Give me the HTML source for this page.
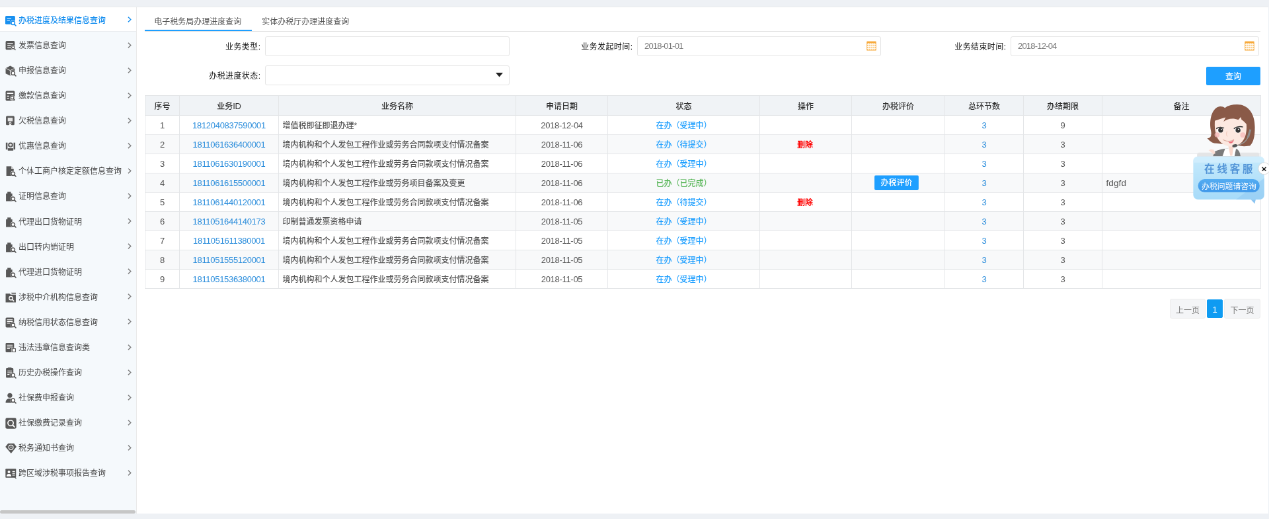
<!DOCTYPE html>
<html lang="zh-CN">
<head>
<meta charset="utf-8">
<title>办税进度及结果信息查询</title>
<style>
*{box-sizing:border-box;margin:0;padding:0}
html,body{width:1269px;height:519px;overflow:hidden;background:#eef1f5}
body{font-family:"Liberation Sans","Noto Sans CJK SC",sans-serif;font-size:12px;color:#444;font-weight:500}
#stage{position:absolute;left:0;top:0;width:1920px;height:786px;transform:scale(0.6609375);transform-origin:0 0;background:#eef1f5;overflow:hidden;will-change:transform}
.abs{position:absolute}
#side{position:absolute;left:0;top:10px;width:207px;height:767px;background:#f5f9fc;border-right:1px solid #e9e9e9}
.sitem{position:absolute;left:0;width:206px;height:38px;line-height:38px;color:#484848;font-size:12px;font-weight:400;white-space:nowrap}
.sitem.act{background:#fff;color:#1890f0;border-bottom:1px solid #e9ecef;font-weight:500}
.sitem .ic{position:absolute;left:8px;top:12.5px}
.sitem .st{position:absolute;left:28px;top:1.5px}
.sitem .chev{position:absolute;left:192.5px;top:15.3px}
#sbar{position:absolute;left:0;top:772px;width:205px;height:5px;border-radius:3px;background:#c6c6c6}
#main{position:absolute;left:207px;top:10px;width:1712px;height:767px;background:#fff}
#tabs{position:absolute;left:219.3px;top:16px;width:1687.7px;height:32px;border-bottom:1px solid #e2e2e2}
.tab{position:absolute;top:0;height:31px;line-height:35px;padding:0 15px;font-size:12px;color:#555;font-weight:400;white-space:nowrap}
.tab.on{border-bottom:2px solid #1e9fff}
.lab{position:absolute;height:30px;line-height:30px;font-size:12px;color:#111;font-weight:400;text-align:right;white-space:nowrap;padding-top:1px;letter-spacing:0.4px;margin-left:0.4px}
.inp{position:absolute;height:30px;border:1px solid #e4e4e4;border-radius:3px;background:#fff;line-height:28px;font-size:13px;letter-spacing:-0.8px;color:#777;padding-left:10px}
.btn{position:absolute;background:#1e9fff;color:#fff;text-align:center;border-radius:2px;font-size:12px;white-space:nowrap}
.tb{position:absolute;left:219px;top:144px;width:1688px;transform:scaleY(1.0034);transform-origin:0 0;border-collapse:collapse;table-layout:fixed;font-size:12px;color:#555}
.tb th,.tb td{border:1px solid #e4e6e8;text-align:center;padding:0;white-space:nowrap;overflow:hidden}
.tb th{height:30px;background:#f0f3f6;font-weight:500;color:#333}
.tb td{height:29px;line-height:26px;padding-top:2px}
.tb tr.ev td{background:#f8f9fa}
.tb td.l{text-align:left;padding-left:5.5px}
.lk{color:#2a8ddc}
.num{font-size:13px;letter-spacing:-0.3px}
.rm{font-size:13.5px;letter-spacing:0.1px;color:#555}
.doing{color:#1e9fff}
.done{color:#5cb85c}
.del{color:#f00;font-weight:700;margin-right:2px}
.pj{display:inline-block;position:relative;top:-2px;margin-right:5px;width:67px;height:22px;line-height:22px;background:#1e9fff;color:#fff;border-radius:2px;vertical-align:middle;font-size:12px}
.pg{position:absolute;height:30px;line-height:28px;padding-top:2.5px;border:1px solid #ececec;background:#f4f5f7;border-radius:3px;color:#777;font-weight:400;font-size:12px;text-align:center;white-space:nowrap}
.pg.cur{background:#0e9bf2;border-color:#0e9bf2;color:#fff;height:28px;line-height:26px;padding-top:1.5px;border-radius:2px;font-weight:400;font-size:13px}
</style>
</head>
<body>
<div id="stage">
<div id="side">
<div class="sitem act" style="top:0.0px"><svg class="ic" viewBox="0 0 16 16" width="17" height="17"><rect x="0" y="1" width="14" height="12" rx="1.5" fill="#1890f0"/><path d="M2.5 4.5h6M2.5 7h4" stroke="#fff" stroke-width="1"/><circle cx="11" cy="11" r="3.6" fill="#fff"/><circle cx="11" cy="11" r="2.6" fill="none" stroke="#1890f0" stroke-width="1.4"/><path d="M13 13l2 2" stroke="#1890f0" stroke-width="1.5" stroke-linecap="round"/></svg><span class="st">办税进度及结果信息查询</span><svg class="chev" viewBox="0 0 6 9" width="6" height="9"><path d="M1 0.7L4.8 4.5 1 8.3" fill="none" stroke="#1890f0" stroke-width="1.45"/></svg></div>
<div class="sitem" style="top:38.65px"><svg class="ic" viewBox="0 0 16 16" width="17" height="17"><rect x="0.5" y="1" width="13" height="12.5" rx="1.5" fill="#585858"/><path d="M3 4.5h8M3 7.5h5M3 10.5h5" stroke="#fff" stroke-width="1.2"/><circle cx="11.3" cy="10.3" r="3.2" fill="#fff"/><circle cx="11" cy="10" r="2" fill="none" stroke="#585858" stroke-width="1.2"/><path d="M12.6 11.8l2 2" stroke="#585858" stroke-width="1.4"/></svg><span class="st">发票信息查询</span><svg class="chev" viewBox="0 0 6 9" width="6" height="9"><path d="M1 0.7L4.8 4.5 1 8.3" fill="none" stroke="#7d7d7d" stroke-width="1.45"/></svg></div>
<div class="sitem" style="top:76.7px"><svg class="ic" viewBox="0 0 16 16" width="17" height="17"><path d="M7 0.5L13.5 4v7.5L7 14.5 0.5 11.5V4z" fill="#585858"/><path d="M0.5 4L7 7.2 13.5 4M7 7.2v7" stroke="#fff" stroke-width="0.8" fill="none"/><circle cx="11" cy="11" r="3.6" fill="#fff"/><circle cx="11" cy="11" r="2.6" fill="none" stroke="#585858" stroke-width="1.4"/><path d="M13 13l2 2" stroke="#585858" stroke-width="1.5" stroke-linecap="round"/></svg><span class="st">申报信息查询</span><svg class="chev" viewBox="0 0 6 9" width="6" height="9"><path d="M1 0.7L4.8 4.5 1 8.3" fill="none" stroke="#7d7d7d" stroke-width="1.45"/></svg></div>
<div class="sitem" style="top:114.75px"><svg class="ic" viewBox="0 0 16 16" width="17" height="17"><rect x="0.5" y="0.5" width="13" height="14" rx="1.5" fill="#585858"/><path d="M2.5 4h9" stroke="#fff" stroke-width="1.6"/><path d="M2.5 8h3M2.5 11h3" stroke="#fff" stroke-width="1.2"/><circle cx="10.2" cy="10.4" r="3.4" fill="#fff"/><circle cx="10" cy="10" r="2.1" fill="none" stroke="#585858" stroke-width="1.2"/><path d="M11.6 11.8l2 2" stroke="#585858" stroke-width="1.4"/></svg><span class="st">缴款信息查询</span><svg class="chev" viewBox="0 0 6 9" width="6" height="9"><path d="M1 0.7L4.8 4.5 1 8.3" fill="none" stroke="#7d7d7d" stroke-width="1.45"/></svg></div>
<div class="sitem" style="top:152.8px"><svg class="ic" viewBox="0 0 16 16" width="17" height="17"><rect x="1" y="0.5" width="12" height="13" rx="1.5" fill="#585858"/><rect x="3.5" y="3" width="7" height="5" fill="#fff" opacity=".85"/><path d="M5 13.5l2-2 2 2v1.5l-2-1.2-2 1.2z" fill="#fff"/><circle cx="7" cy="10.8" r="1.8" fill="#fff"/><circle cx="7" cy="10.8" r="1" fill="#585858"/></svg><span class="st">欠税信息查询</span><svg class="chev" viewBox="0 0 6 9" width="6" height="9"><path d="M1 0.7L4.8 4.5 1 8.3" fill="none" stroke="#7d7d7d" stroke-width="1.45"/></svg></div>
<div class="sitem" style="top:190.85px"><svg class="ic" viewBox="0 0 16 16" width="17" height="17"><path d="M0.8 2.5h2.4v10H0.8zM11.8 2.5h2.4v10h-2.4z" fill="#585858"/><circle cx="7.5" cy="6" r="3.6" fill="#585858"/><path d="M7.5 4v4M5.8 5.2h3.4M5.8 6.8h3.4" stroke="#fff" stroke-width="0.8"/><path d="M3.6 10.5h7.8v3.5H3.6z" fill="#585858"/></svg><span class="st">优惠信息查询</span><svg class="chev" viewBox="0 0 6 9" width="6" height="9"><path d="M1 0.7L4.8 4.5 1 8.3" fill="none" stroke="#7d7d7d" stroke-width="1.45"/></svg></div>
<div class="sitem" style="top:228.9px"><svg class="ic" viewBox="0 0 16 16" width="17" height="17"><path d="M1.5 0.5h7l3.5 3.5v10h-10.5z" fill="#585858"/><path d="M8.5 0.5v3.5H12" fill="#fff" opacity=".7"/><circle cx="11" cy="11" r="3.6" fill="#fff"/><circle cx="11" cy="11" r="2.6" fill="none" stroke="#585858" stroke-width="1.4"/><path d="M13 13l2 2" stroke="#585858" stroke-width="1.5" stroke-linecap="round"/></svg><span class="st">个体工商户核定定额信息查询</span><svg class="chev" viewBox="0 0 6 9" width="6" height="9"><path d="M1 0.7L4.8 4.5 1 8.3" fill="none" stroke="#7d7d7d" stroke-width="1.45"/></svg></div>
<div class="sitem" style="top:266.95px"><svg class="ic" viewBox="0 0 16 16" width="17" height="17"><path d="M1 3.5h9v11H1z" fill="#585858"/><path d="M3 1h5v3H3z" fill="#585858"/><circle cx="11" cy="11" r="3.6" fill="#fff"/><circle cx="11" cy="11" r="2.6" fill="none" stroke="#585858" stroke-width="1.4"/><path d="M13 13l2 2" stroke="#585858" stroke-width="1.5" stroke-linecap="round"/></svg><span class="st">证明信息查询</span><svg class="chev" viewBox="0 0 6 9" width="6" height="9"><path d="M1 0.7L4.8 4.5 1 8.3" fill="none" stroke="#7d7d7d" stroke-width="1.45"/></svg></div>
<div class="sitem" style="top:305.0px"><svg class="ic" viewBox="0 0 16 16" width="17" height="17"><path d="M1 3.5h9v11H1z" fill="#585858"/><path d="M3 1h5v3H3z" fill="#585858"/><circle cx="11" cy="11" r="3.6" fill="#fff"/><circle cx="11" cy="11" r="2.6" fill="none" stroke="#585858" stroke-width="1.4"/><path d="M13 13l2 2" stroke="#585858" stroke-width="1.5" stroke-linecap="round"/></svg><span class="st">代理出口货物证明</span><svg class="chev" viewBox="0 0 6 9" width="6" height="9"><path d="M1 0.7L4.8 4.5 1 8.3" fill="none" stroke="#7d7d7d" stroke-width="1.45"/></svg></div>
<div class="sitem" style="top:343.05px"><svg class="ic" viewBox="0 0 16 16" width="17" height="17"><path d="M1 3.5h9v11H1z" fill="#585858"/><path d="M3 1h5v3H3z" fill="#585858"/><circle cx="11" cy="11" r="3.6" fill="#fff"/><circle cx="11" cy="11" r="2.6" fill="none" stroke="#585858" stroke-width="1.4"/><path d="M13 13l2 2" stroke="#585858" stroke-width="1.5" stroke-linecap="round"/></svg><span class="st">出口转内销证明</span><svg class="chev" viewBox="0 0 6 9" width="6" height="9"><path d="M1 0.7L4.8 4.5 1 8.3" fill="none" stroke="#7d7d7d" stroke-width="1.45"/></svg></div>
<div class="sitem" style="top:381.1px"><svg class="ic" viewBox="0 0 16 16" width="17" height="17"><path d="M1 3.5h9v11H1z" fill="#585858"/><path d="M3 1h5v3H3z" fill="#585858"/><circle cx="11" cy="11" r="3.6" fill="#fff"/><circle cx="11" cy="11" r="2.6" fill="none" stroke="#585858" stroke-width="1.4"/><path d="M13 13l2 2" stroke="#585858" stroke-width="1.5" stroke-linecap="round"/></svg><span class="st">代理进口货物证明</span><svg class="chev" viewBox="0 0 6 9" width="6" height="9"><path d="M1 0.7L4.8 4.5 1 8.3" fill="none" stroke="#7d7d7d" stroke-width="1.45"/></svg></div>
<div class="sitem" style="top:419.15px"><svg class="ic" viewBox="0 0 16 16" width="17" height="17"><path d="M0.5 2h6l1.2 1.6h7.3V14.5H0.5z" fill="#585858"/><path d="M8.2 0.8h6.8v2H9.4z" fill="#585858" opacity=".75"/><circle cx="8" cy="8.6" r="2.5" fill="none" stroke="#fff" stroke-width="1.3"/><path d="M9.9 10.5l2.1 2.1" stroke="#fff" stroke-width="1.4" stroke-linecap="round"/></svg><span class="st">涉税中介机构信息查询</span><svg class="chev" viewBox="0 0 6 9" width="6" height="9"><path d="M1 0.7L4.8 4.5 1 8.3" fill="none" stroke="#7d7d7d" stroke-width="1.45"/></svg></div>
<div class="sitem" style="top:457.2px"><svg class="ic" viewBox="0 0 16 16" width="17" height="17"><rect x="0.5" y="0.5" width="12" height="14" rx="1.5" fill="#585858"/><path d="M2.5 3.5h8M2.5 6h8M2.5 8.5h4" stroke="#fff" stroke-width="1"/><circle cx="11" cy="11" r="3.6" fill="#fff"/><circle cx="11" cy="11" r="2.6" fill="none" stroke="#585858" stroke-width="1.4"/><path d="M13 13l2 2" stroke="#585858" stroke-width="1.5" stroke-linecap="round"/></svg><span class="st">纳税信用状态信息查询</span><svg class="chev" viewBox="0 0 6 9" width="6" height="9"><path d="M1 0.7L4.8 4.5 1 8.3" fill="none" stroke="#7d7d7d" stroke-width="1.45"/></svg></div>
<div class="sitem" style="top:495.25px"><svg class="ic" viewBox="0 0 16 16" width="17" height="17"><rect x="0.5" y="1" width="12" height="13" rx="1.2" fill="#585858"/><path d="M2.5 4h8M2.5 6.5h8M2.5 9h4" stroke="#fff" stroke-width="1"/><rect x="9" y="8" width="6" height="6" fill="#fff"/><rect x="10" y="9" width="4.5" height="4.5" fill="none" stroke="#585858" stroke-width="1"/></svg><span class="st">违法违章信息查询类</span><svg class="chev" viewBox="0 0 6 9" width="6" height="9"><path d="M1 0.7L4.8 4.5 1 8.3" fill="none" stroke="#7d7d7d" stroke-width="1.45"/></svg></div>
<div class="sitem" style="top:533.3px"><svg class="ic" viewBox="0 0 16 16" width="17" height="17"><rect x="1" y="1" width="10.5" height="13.5" rx="1.2" fill="#585858"/><rect x="3.5" y="0" width="5.5" height="2.6" rx="0.8" fill="#585858"/><path d="M3 5h6.5M3 7.5h6.5M3 10h3" stroke="#fff" stroke-width="1"/><circle cx="11" cy="11" r="3.6" fill="#fff"/><circle cx="11" cy="11" r="2.6" fill="none" stroke="#585858" stroke-width="1.4"/><path d="M13 13l2 2" stroke="#585858" stroke-width="1.5" stroke-linecap="round"/></svg><span class="st">历史办税操作查询</span><svg class="chev" viewBox="0 0 6 9" width="6" height="9"><path d="M1 0.7L4.8 4.5 1 8.3" fill="none" stroke="#7d7d7d" stroke-width="1.45"/></svg></div>
<div class="sitem" style="top:571.35px"><svg class="ic" viewBox="0 0 16 16" width="17" height="17"><circle cx="6.5" cy="4" r="3.4" fill="#585858"/><path d="M0.5 14.5c0-4.5 2.6-6 6-6s6 1.5 6 6z" fill="#585858"/><circle cx="11" cy="11" r="3.6" fill="#fff"/><circle cx="11" cy="11" r="2.6" fill="none" stroke="#585858" stroke-width="1.4"/><path d="M13 13l2 2" stroke="#585858" stroke-width="1.5" stroke-linecap="round"/></svg><span class="st">社保费申报查询</span><svg class="chev" viewBox="0 0 6 9" width="6" height="9"><path d="M1 0.7L4.8 4.5 1 8.3" fill="none" stroke="#7d7d7d" stroke-width="1.45"/></svg></div>
<div class="sitem" style="top:609.4px"><svg class="ic" viewBox="0 0 16 16" width="17" height="17"><rect x="0.3" y="0.3" width="15.4" height="15.4" rx="2.2" fill="#585858"/><circle cx="7.6" cy="7.6" r="3.9" fill="none" stroke="#fff" stroke-width="1.5"/><path d="M10.6 10.6l2.4 2.4" stroke="#fff" stroke-width="1.7" stroke-linecap="round"/></svg><span class="st">社保缴费记录查询</span><svg class="chev" viewBox="0 0 6 9" width="6" height="9"><path d="M1 0.7L4.8 4.5 1 8.3" fill="none" stroke="#7d7d7d" stroke-width="1.45"/></svg></div>
<div class="sitem" style="top:647.45px"><svg class="ic" viewBox="0 0 16 16" width="17" height="17"><path d="M4 1h8.5L16 5.6 8.2 15 0.2 5.6z" fill="#585858"/><circle cx="8.1" cy="6.4" r="3.7" fill="#fff"/><circle cx="8.1" cy="6.4" r="2.6" fill="#585858"/><circle cx="8.1" cy="6.4" r="1.2" fill="#fff" opacity=".55"/></svg><span class="st">税务通知书查询</span><svg class="chev" viewBox="0 0 6 9" width="6" height="9"><path d="M1 0.7L4.8 4.5 1 8.3" fill="none" stroke="#7d7d7d" stroke-width="1.45"/></svg></div>
<div class="sitem" style="top:685.5px"><svg class="ic" viewBox="0 0 16 16" width="17" height="17"><rect x="0.3" y="1.2" width="15" height="12.6" rx="0.8" fill="#585858"/><circle cx="5.2" cy="5.6" r="1.9" fill="#fff"/><path d="M1.8 12c0-2.8 1.4-3.6 3.4-3.6s3.4.8 3.4 3.6z" fill="#fff"/><path d="M10 5h3.8M10 7.6h3.8M10 10.2h3.8" stroke="#fff" stroke-width="1.1"/><path d="M13.6 13.4l2 2" stroke="#585858" stroke-width="1"/></svg><span class="st">跨区域涉税事项报告查询</span><svg class="chev" viewBox="0 0 6 9" width="6" height="9"><path d="M1 0.7L4.8 4.5 1 8.3" fill="none" stroke="#7d7d7d" stroke-width="1.45"/></svg></div>
</div>
<div id="sbar"></div>
<div id="main"></div>
<div class="abs" style="left:0;top:10px;width:1919px;height:1px;background:#e9eaeb"></div>
<div id="tabs">
<div class="tab on" style="left:0;padding:0 16px 0 14px">电子税务局办理进度查询</div>
<div class="tab" style="left:162px">实体办税厅办理进度查询</div>
</div>
<div class="lab" style="left:220px;width:174px;top:55px">业务类型:</div>
<div class="inp" style="left:401px;top:55px;width:370px"></div>
<div class="lab" style="left:220px;width:174px;top:99px">办税进度状态:</div>
<div class="inp" style="left:401px;top:99px;width:370px"></div>
<svg class="abs" style="left:750px;top:110px" width="11" height="7" viewBox="0 0 11 7"><path d="M0 0h11L5.5 6.6z" fill="#222"/></svg>
<div class="lab" style="left:782px;width:175px;top:55px">业务发起时间:</div>
<div class="inp" style="left:964px;top:55px;width:369px">2018-01-01</div>
<svg class="abs" style="left:1311px;top:62px" width="15" height="15" viewBox="0 0 15 15"><rect x="0.3" y="0.6" width="14.4" height="14" rx="0.9" fill="#f7a93b"/><rect x="1.4" y="3" width="12.2" height="10.6" fill="#fbd08f"/><path d="M3.5 3.2v10.6" stroke="#fff" stroke-width="0.9"/><path d="M6.2 3.2v10.6" stroke="#fff" stroke-width="0.9"/><path d="M8.9 3.2v10.6" stroke="#fff" stroke-width="0.9"/><path d="M11.600000000000001 3.2v10.6" stroke="#fff" stroke-width="0.9"/><path d="M1 5.6h13" stroke="#fff" stroke-width="0.9"/><path d="M1 8.5h13" stroke="#fff" stroke-width="0.9"/><path d="M1 11.399999999999999h13" stroke="#fff" stroke-width="0.9"/></svg>
<div class="lab" style="left:1345px;width:177px;top:55px">业务结束时间:</div>
<div class="inp" style="left:1529px;top:55px;width:376px">2018-12-04</div>
<svg class="abs" style="left:1883px;top:62px" width="15" height="15" viewBox="0 0 15 15"><rect x="0.3" y="0.6" width="14.4" height="14" rx="0.9" fill="#f7a93b"/><rect x="1.4" y="3" width="12.2" height="10.6" fill="#fbd08f"/><path d="M3.5 3.2v10.6" stroke="#fff" stroke-width="0.9"/><path d="M6.2 3.2v10.6" stroke="#fff" stroke-width="0.9"/><path d="M8.9 3.2v10.6" stroke="#fff" stroke-width="0.9"/><path d="M11.600000000000001 3.2v10.6" stroke="#fff" stroke-width="0.9"/><path d="M1 5.6h13" stroke="#fff" stroke-width="0.9"/><path d="M1 8.5h13" stroke="#fff" stroke-width="0.9"/><path d="M1 11.399999999999999h13" stroke="#fff" stroke-width="0.9"/></svg>
<div class="btn" style="left:1825px;top:101px;width:82px;height:28px;line-height:31px">查询</div>
<table class="tb"><colgroup><col style="width:52px"><col style="width:150px"><col style="width:359px"><col style="width:139px"><col style="width:230px"><col style="width:139px"><col style="width:141px"><col style="width:119px"><col style="width:119px"><col style="width:240px"></colgroup><thead><tr><th>序号</th><th>业务<span class=num>ID</span></th><th>业务名称</th><th>申请日期</th><th>状态</th><th>操作</th><th>办税评价</th><th>总环节数</th><th>办结期限</th><th>备注</th></tr></thead><tbody><tr class=""><td><span class="num">1</span></td><td><span class="lk num">1812040837590001</span></td><td class="l">增值税即征即退办理*</td><td><span class="num">2018-12-04</span></td><td><span class="doing">在办（受理中）</span></td><td></td><td></td><td><span class="lk num">3</span></td><td><span class="num">9</span></td><td class="l"><span class="rm"></span></td></tr><tr class="ev"><td><span class="num">2</span></td><td><span class="lk num">1811061636400001</span></td><td class="l">境内机构和个人发包工程作业或劳务合同款项支付情况备案</td><td><span class="num">2018-11-06</span></td><td><span class="doing">在办（待提交）</span></td><td><span class="del">删除</span></td><td></td><td><span class="lk num">3</span></td><td><span class="num">3</span></td><td class="l"><span class="rm"></span></td></tr><tr class=""><td><span class="num">3</span></td><td><span class="lk num">1811061630190001</span></td><td class="l">境内机构和个人发包工程作业或劳务合同款项支付情况备案</td><td><span class="num">2018-11-06</span></td><td><span class="doing">在办（受理中）</span></td><td></td><td></td><td><span class="lk num">3</span></td><td><span class="num">3</span></td><td class="l"><span class="rm"></span></td></tr><tr class="ev"><td><span class="num">4</span></td><td><span class="lk num">1811061615500001</span></td><td class="l">境内机构和个人发包工程作业或劳务项目备案及变更</td><td><span class="num">2018-11-06</span></td><td><span class="done">已办（已完成）</span></td><td></td><td><span class="pj">办税评价</span></td><td><span class="lk num">3</span></td><td><span class="num">3</span></td><td class="l"><span class="rm">fdgfd</span></td></tr><tr class=""><td><span class="num">5</span></td><td><span class="lk num">1811061440120001</span></td><td class="l">境内机构和个人发包工程作业或劳务合同款项支付情况备案</td><td><span class="num">2018-11-06</span></td><td><span class="doing">在办（待提交）</span></td><td><span class="del">删除</span></td><td></td><td><span class="lk num">3</span></td><td><span class="num">3</span></td><td class="l"><span class="rm"></span></td></tr><tr class="ev"><td><span class="num">6</span></td><td><span class="lk num">1811051644140173</span></td><td class="l">印制普通发票资格申请</td><td><span class="num">2018-11-05</span></td><td><span class="doing">在办（受理中）</span></td><td></td><td></td><td><span class="lk num">3</span></td><td><span class="num">3</span></td><td class="l"><span class="rm"></span></td></tr><tr class=""><td><span class="num">7</span></td><td><span class="lk num">1811051611380001</span></td><td class="l">境内机构和个人发包工程作业或劳务合同款项支付情况备案</td><td><span class="num">2018-11-05</span></td><td><span class="doing">在办（受理中）</span></td><td></td><td></td><td><span class="lk num">3</span></td><td><span class="num">3</span></td><td class="l"><span class="rm"></span></td></tr><tr class="ev"><td><span class="num">8</span></td><td><span class="lk num">1811051555120001</span></td><td class="l">境内机构和个人发包工程作业或劳务合同款项支付情况备案</td><td><span class="num">2018-11-05</span></td><td><span class="doing">在办（受理中）</span></td><td></td><td></td><td><span class="lk num">3</span></td><td><span class="num">3</span></td><td class="l"><span class="rm"></span></td></tr><tr class=""><td><span class="num">9</span></td><td><span class="lk num">1811051536380001</span></td><td class="l">境内机构和个人发包工程作业或劳务合同款项支付情况备案</td><td><span class="num">2018-11-05</span></td><td><span class="doing">在办（受理中）</span></td><td></td><td></td><td><span class="lk num">3</span></td><td><span class="num">3</span></td><td class="l"><span class="rm"></span></td></tr></tbody></table>
<div class="pg" style="left:1770px;top:452px;width:54px">上一页</div>
<div class="pg cur" style="left:1826px;top:453px;width:24px">1</div>
<div class="pg" style="left:1852px;top:452px;width:55px">下一页</div>
<svg class="abs" style="left:1798.96px;top:143.74px" width="121.04" height="174.00" viewBox="1189 95 80 115">
<defs>
<linearGradient id="bg1" x1="0" y1="0" x2="0" y2="1"><stop offset="0" stop-color="#c6eafc"/><stop offset="1" stop-color="#a7dbf9"/></linearGradient>
<linearGradient id="bg2" x1="0" y1="0" x2="0" y2="1"><stop offset="0" stop-color="#55adf2"/><stop offset="1" stop-color="#3f98ea"/></linearGradient>
</defs>
<rect x="1197" y="152.4" width="62.5" height="6" rx="2.4" fill="#e4e5e6"/>
<!-- body -->
<path d="M1213 156 L1214.5 151.5 Q1222 148 1229 148.5 L1236 148.5 Q1239.5 149.5 1240.5 156 Z" fill="#7b7b7b"/>
<path d="M1222.5 156 L1225 148.6 L1236 148.6 L1234.5 156 Z" fill="#fff"/>
<path d="M1228.3 146 L1233.6 146 L1232.2 155.5 L1230.2 155.5 Z" fill="#f9d9cd"/>
<path d="M1208.5 150.2 Q1211 148.6 1213.5 149.6 L1215.5 153 L1213.5 154.2 Q1211 151.6 1208.5 150.2Z" fill="#fbe0d6"/>
<!-- hair back -->
<path d="M1237 104.3 C1248 104.3 1254.8 113 1254.8 127 C1254.8 136 1253.5 142 1250 145.5 L1244 146 L1216 143 C1213 143.5 1210 141.5 1207.2 138.2 C1210.5 138 1211.8 135.5 1211 131 C1208.5 120 1212 107 1220 106.2 C1222 106.1 1223.6 106.7 1224.8 107.7 C1228 105.3 1232 104.3 1237 104.3Z" fill="#8a5a48"/>
<!-- face -->
<path d="M1215 118 C1214 128 1215 137 1221 142.5 C1226 147 1234 147.5 1240 143.5 C1246 139 1247.5 130 1246 120 C1240 114 1222 113 1215 118Z" fill="#fce8e0"/>
<!-- fringe -->
<path d="M1213.5 121 C1214 112 1222 107.5 1232 108 C1242 108.5 1249 114 1249.5 128 C1247 124.5 1244.5 121.5 1241.5 119.5 L1240.8 116.8 L1238.2 119.6 C1233 117.5 1227 118.5 1223.5 121.5 L1225.5 117.2 C1221 118.3 1217 120 1213.5 121Z" fill="#8a5a48"/>
<!-- eyes -->
<ellipse cx="1220" cy="129.8" rx="3.3" ry="2.9" fill="#fff"/><ellipse cx="1237.8" cy="129.8" rx="3.4" ry="2.9" fill="#fff"/>
<circle cx="1220.6" cy="130" r="2.4" fill="#333"/><circle cx="1238" cy="130" r="2.5" fill="#333"/>
<path d="M1216.2 128.4 Q1220 125.8 1224 128" stroke="#333" stroke-width="1" fill="none"/><path d="M1233.8 128.4 Q1238 125.6 1243 126.8" stroke="#333" stroke-width="1" fill="none"/>
<circle cx="1221.3" cy="129.2" r="0.6" fill="#fff"/><circle cx="1238.4" cy="129.2" r="0.6" fill="#fff"/>
<!-- cheeks -->
<circle cx="1217" cy="134.6" r="2.5" fill="#f8bcbc" opacity=".8"/><circle cx="1242.8" cy="134.8" r="2.6" fill="#f8bcbc" opacity=".8"/>
<!-- nose / mouth -->
<path d="M1227 131 Q1225.5 135 1227.5 136.2" stroke="#f1c4b6" stroke-width="0.6" fill="none"/>
<path d="M1223 139.6 Q1229 142.6 1234 139.4" stroke="#c98d7e" stroke-width="0.5" fill="none"/>
<path d="M1228 141.2 Q1231.5 142.4 1234 139.6 Q1232.6 143.8 1229.8 143 Z" fill="#ef6a78"/>
<!-- headset -->
<path d="M1249.4 129 L1251.4 129.6 L1249 137.4 L1247 136.8 Z" fill="#8d8d8d"/>
<path d="M1248 137 Q1245 144 1236 145.4" stroke="#9a9a9a" stroke-width="0.9" fill="none"/>
<ellipse cx="1234.8" cy="145.6" rx="2.6" ry="1.5" fill="#555" transform="rotate(-12 1234.8 145.6)"/>
<!-- bubble -->
<path d="M1250.5 199 L1254.6 203.6 L1255.8 199 Z" fill="#8cc5f1"/>
<rect x="1193.2" y="156.3" width="71" height="42.9" rx="4.5" fill="url(#bg1)"/>
<path d="M1193.2 161.4 Q1193.2 156.3 1198 156.3 L1259.6 156.3 Q1264.2 156.3 1264.2 161.4 L1264.2 162.4 L1193.2 162.4Z" fill="#d6effd" opacity=".7"/>
<path d="M1236 199.2 L1259.6 199.2 Q1264.2 199.2 1264.2 194.6 L1264.2 178 Z" fill="#8fc8f3" opacity=".55"/>
<text x="1204.2" y="172.4" font-family="'Liberation Sans','Noto Sans CJK SC',sans-serif" font-size="10.4" font-weight="700" fill="#5596d8" letter-spacing="2.35">在线客服</text>
<rect x="1198" y="179" width="61.6" height="13" rx="6.5" fill="url(#bg2)"/>
<text x="1201.6" y="188.6" font-family="'Liberation Sans','Noto Sans CJK SC',sans-serif" font-size="7.85" font-weight="400" fill="#fff">办税问题请咨询</text>
<!-- close -->
<circle cx="1264.1" cy="168.3" r="5.9" fill="#fff" stroke="#d4d4d4" stroke-width="0.6"/>
<text x="1264" y="171.4" text-anchor="middle" font-family="'Liberation Sans',sans-serif" font-size="9" font-weight="700" fill="#111">×</text>
</svg>
</div>
</body>
</html>
